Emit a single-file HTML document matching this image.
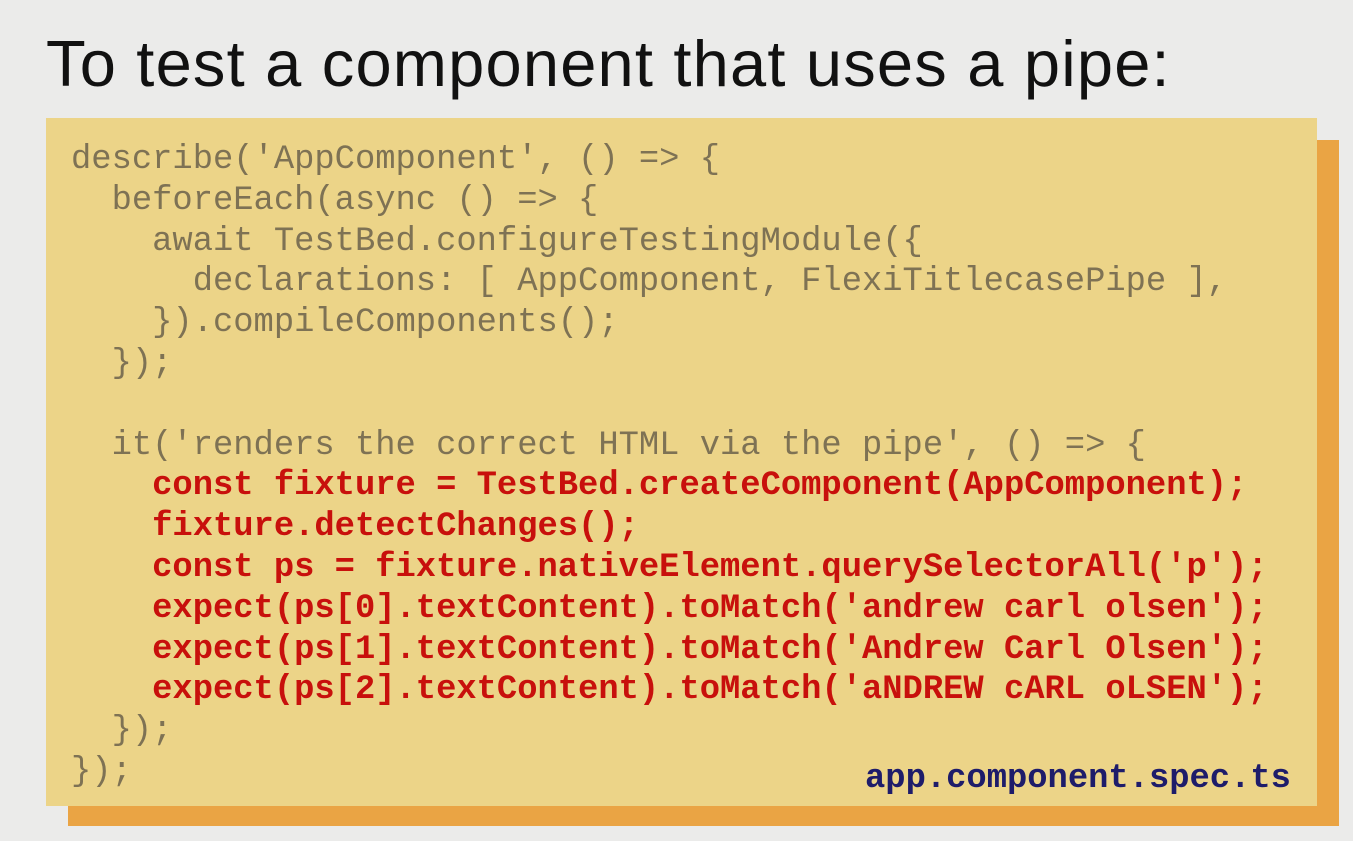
<!DOCTYPE html>
<html><head><style>
html,body{margin:0;padding:0;width:1353px;height:841px;background:#ebebea;overflow:hidden;font-family:"Liberation Sans",sans-serif}
h1{position:absolute;left:46px;top:24px;margin:0;font-weight:normal;font-size:65px;color:#111;letter-spacing:1.2px;line-height:80px;white-space:nowrap}
.sh{position:absolute;left:68px;top:140px;width:1271px;height:686px;background:#eaa444}
.bx{position:absolute;left:46px;top:118px;width:1271px;height:688px;background:#ecd488}
pre{position:absolute;left:71px;top:140px;margin:0;font-family:"Liberation Mono",monospace;font-size:33.8px;line-height:40.8px;color:#7e7254}
b{color:#c8100c}
.fn{position:absolute;left:865px;top:760px;font-family:"Liberation Mono",monospace;font-size:33.8px;font-weight:bold;color:#1e1c6a}
</style></head><body>
<h1>To test a component that uses a pipe:</h1>
<div class="sh"></div><div class="bx"></div>
<pre>describe('AppComponent', () =&gt; {
  beforeEach(async () =&gt; {
    await TestBed.configureTestingModule({
      declarations: [ AppComponent, FlexiTitlecasePipe ],
    }).compileComponents();
  });

  it('renders the correct HTML via the pipe', () =&gt; {
    <b>const fixture = TestBed.createComponent(AppComponent);</b>
    <b>fixture.detectChanges();</b>
    <b>const ps = fixture.nativeElement.querySelectorAll('p');</b>
    <b>expect(ps[0].textContent).toMatch('andrew carl olsen');</b>
    <b>expect(ps[1].textContent).toMatch('Andrew Carl Olsen');</b>
    <b>expect(ps[2].textContent).toMatch('aNDREW cARL oLSEN');</b>
  });
});</pre>
<div class="fn">app.component.spec.ts</div>
</body></html>
